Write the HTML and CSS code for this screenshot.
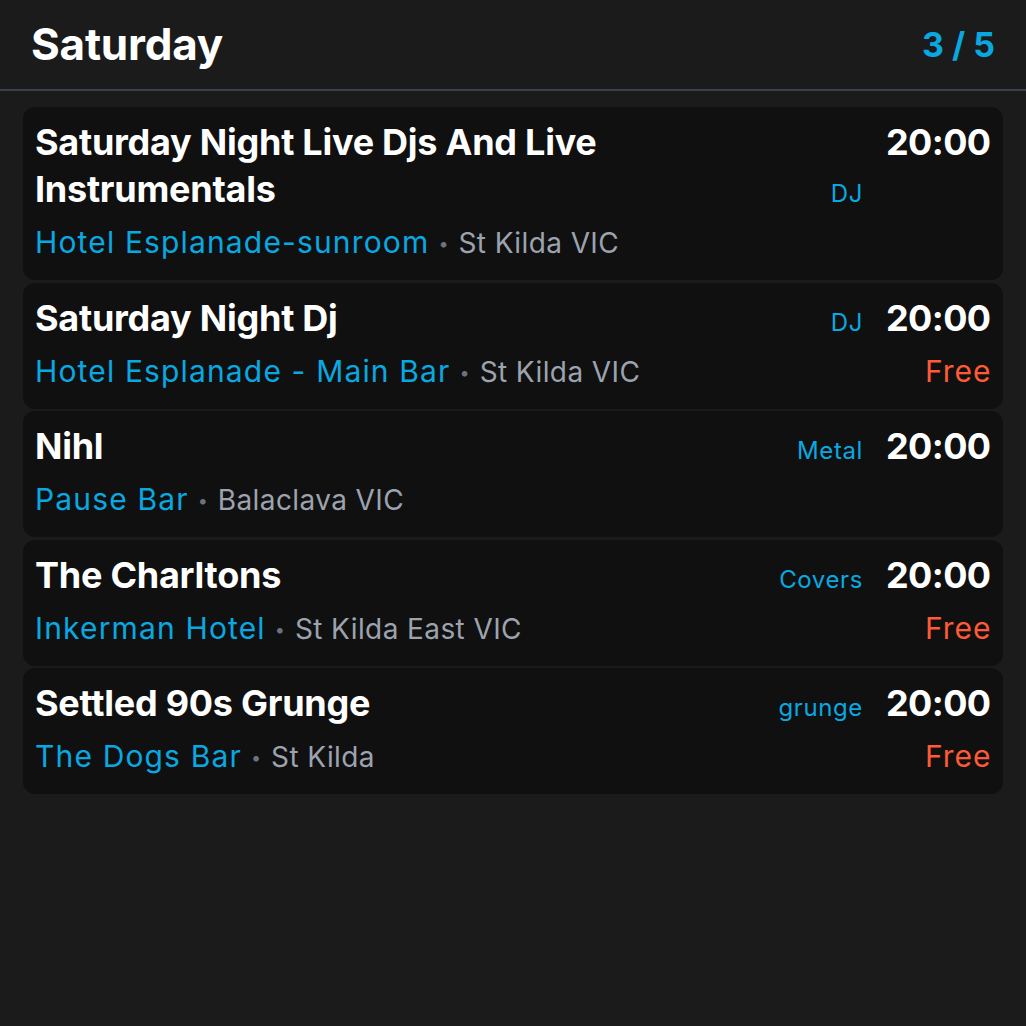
FILE: index.html
```html
<!DOCTYPE html>
<html lang="en">
<head>
<meta charset="utf-8">
<title>Saturday</title>
<link rel="stylesheet" href="styles.css">
</head>
<body>
<header class="day-header">
  <h1 class="day-title">Saturday</h1>
  <div class="day-count">3 / 5</div>
</header>
<main class="event-list">
  <article class="event">
    <div class="event-top">
      <h2 class="event-title">Saturday Night Live Djs And Live Instrumentals</h2>
      <span class="event-genre">DJ</span>
      <span class="event-time">20:00</span>
    </div>
    <div class="event-bottom">
      <div class="event-place"><span class="venue">Hotel Esplanade-sunroom</span><span class="dot">•</span><span class="suburb">St Kilda VIC</span></div>
    </div>
  </article>
  <article class="event">
    <div class="event-top">
      <h2 class="event-title">Saturday Night Dj</h2>
      <span class="event-genre">DJ</span>
      <span class="event-time">20:00</span>
    </div>
    <div class="event-bottom">
      <div class="event-place"><span class="venue">Hotel Esplanade - Main Bar</span><span class="dot">•</span><span class="suburb">St Kilda VIC</span></div>
      <span class="event-price">Free</span>
    </div>
  </article>
  <article class="event">
    <div class="event-top">
      <h2 class="event-title">Nihl</h2>
      <span class="event-genre">Metal</span>
      <span class="event-time">20:00</span>
    </div>
    <div class="event-bottom">
      <div class="event-place"><span class="venue">Pause Bar</span><span class="dot">•</span><span class="suburb">Balaclava VIC</span></div>
    </div>
  </article>
  <article class="event">
    <div class="event-top">
      <h2 class="event-title">The Charltons</h2>
      <span class="event-genre">Covers</span>
      <span class="event-time">20:00</span>
    </div>
    <div class="event-bottom">
      <div class="event-place"><span class="venue">Inkerman Hotel</span><span class="dot">•</span><span class="suburb">St Kilda East VIC</span></div>
      <span class="event-price">Free</span>
    </div>
  </article>
  <article class="event">
    <div class="event-top">
      <h2 class="event-title">Settled 90s Grunge</h2>
      <span class="event-genre">grunge</span>
      <span class="event-time">20:00</span>
    </div>
    <div class="event-bottom">
      <div class="event-place"><span class="venue">The Dogs Bar</span><span class="dot">•</span><span class="suburb">St Kilda</span></div>
      <span class="event-price">Free</span>
    </div>
  </article>
</main>
</body>
</html>
```
FILE: styles.css
```css
* { box-sizing: border-box; }

html, body {
  margin: 0;
  padding: 0;
  background: #1b1b1b;
  color: #ffffff;
  font-family: Inter, "Noto Sans", "Liberation Sans", sans-serif;
}

body {
  height: 1026px;
}

.day-header {
  display: flex;
  align-items: center;
  justify-content: space-between;
  padding: 18px 31px 18px 31px;
  border-bottom: 2px solid #3b414c;
}

.day-title {
  margin: 0;
  font-size: 44px;
  line-height: 53px;
  font-weight: 700;
  letter-spacing: -0.2px;
}

.day-count {
  font-size: 34px;
  line-height: 41px;
  font-weight: 700;
  color: #0aa8e1;
}

.event-list {
  display: flex;
  flex-direction: column;
  gap: 2.5px;
  padding: 16px 23px 0 23px;
}

.event {
  background: #101010;
  border-radius: 12px;
  padding: 12px 12px 15px 12px;
}

.event-top {
  display: flex;
  align-items: last baseline;
}

.event-title {
  flex: 1;
  margin: 0;
  font-size: 36px;
  line-height: 47px;
  font-weight: 700;
  letter-spacing: -0.25px;
  padding-right: 24px;
}

.event-genre {
  font-size: 24px;
  line-height: 30px;
  color: #0aa8e1;
  letter-spacing: 0.6px;
  margin-right: 23px;
}

.event-time {
  align-self: flex-start;
  font-size: 36px;
  line-height: 47px;
  font-weight: 700;
  letter-spacing: -0.6px;
  margin-right: 0.5px;
}

.event-bottom {
  display: flex;
  align-items: baseline;
  justify-content: space-between;
  margin-top: 7px;
  height: 45px;
}

.event-place {
  font-size: 30px;
  line-height: 45px;
}

.venue {
  color: #0aa8e1;
  letter-spacing: 1.15px;
}

.dot {
  color: #6b7280;
  font-size: 18px;
  margin: 0 10px 0 9px;
  vertical-align: 3px;
}

.suburb {
  color: #9ca3af;
  font-size: 28px;
  letter-spacing: 0.4px;
}

.event-price {
  font-size: 30px;
  line-height: 45px;
  color: #ff5a36;
  letter-spacing: 1px;
  margin-right: -0.5px;
}
```
